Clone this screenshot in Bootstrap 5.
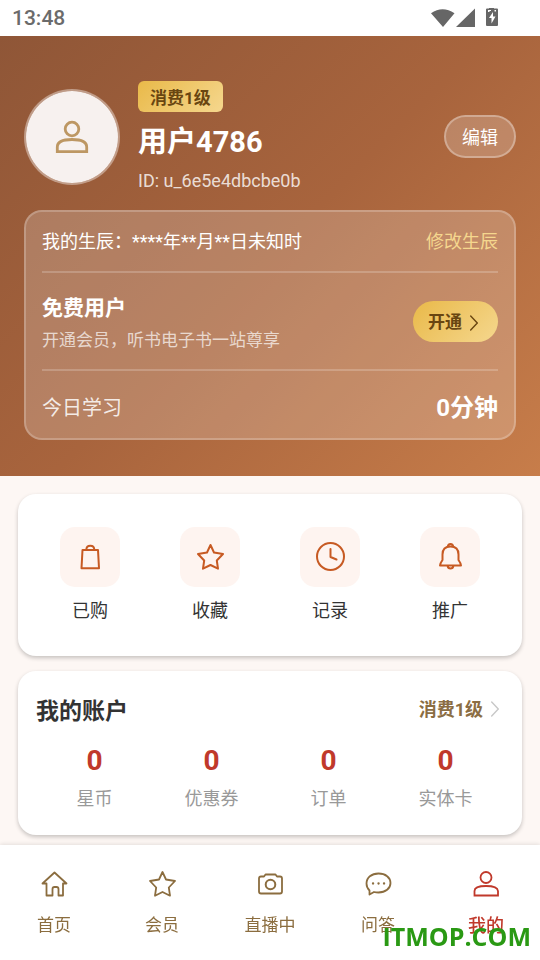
<!DOCTYPE html>
<html lang="zh-CN">
<head>
<meta charset="utf-8">
<meta name="viewport" content="width=device-width, initial-scale=1">
<title>我的</title>
<link href="https://cdn.jsdelivr.net/npm/bootstrap@5.3.0/dist/css/bootstrap.min.css" rel="stylesheet">
<style>
  body { font-family: Roboto, "Noto Sans CJK SC", sans-serif; background: #fdf7f4; color: #333; }
  button, a { font-family: inherit; }
  svg { display: block; flex: none; }
  .line-icon { fill: none; stroke: currentColor; stroke-width: 2; stroke-linejoin: round; stroke-linecap: round; }
  .thin { stroke-width: 1.8; }
  .chevron { stroke-width: 1.4; }
  .sharp { stroke-linejoin: miter; }
  .status-bar { height: 36px; padding: 0 42px 0 12px; font-size: 21px; font-weight: 500; line-height: 36px; color: #6b6b6b; background: #fff; }
  .hero { padding: 45px 24px 36px; color: #fff; background: linear-gradient(135deg, #8f5637 0%, #a8643d 50%, #c77d4a 100%); }
  .avatar { width: 96px; height: 96px; border: 2px solid rgba(255,255,255,.4); background: #f7f1ef; background-clip: padding-box; color: #bd9763; }
  .avatar svg { stroke-width: 2.8; }
  .gold { background: linear-gradient(135deg, #e9b949, #f5d78e); color: #694611; font-size: 17px; font-weight: 700; }
  .identity { margin-left: 18px; }
  .level-tag { padding: 3px 12px 0; border-radius: 6px; line-height: 28px; margin-bottom: 11px; }
  .user-name { font-size: 29px; font-weight: 700; line-height: 38px; margin: 0 0 9px; }
  .user-id { font-size: 18px; line-height: 22px; margin: 0; color: rgba(255,255,255,.8); }
  .edit-btn { padding: 2px 16px 0; height: 43px; border: 2px solid rgba(255,255,255,.3); border-radius: 22px; background: rgba(255,255,255,.2); color: #fff; font-size: 18px; }
  .member-panel { margin-top: 18px; padding: 0 16px; border: 2px solid rgba(255,255,255,.22); border-radius: 18px; background: linear-gradient(rgba(255,255,255,.2), rgba(255,255,255,.2)) border-box; }
  .panel-row { border-bottom: 2px solid rgba(255,255,255,.2); }
  .panel-row:last-child { border-bottom: 0; }
  .birth { font-size: 18px; line-height: 27px; padding: 16px 0; }
  .birth a { color: #f5d78e; }
  .plan { padding: 17px 0 16px; }
  .plan h2 { font-size: 21px; font-weight: 700; line-height: 36px; margin: 0 0 2px; }
  .plan p { font-size: 17px; line-height: 25px; margin: 0; color: rgba(255,255,255,.7); }
  .open-btn { height: 41px; padding: 2px 20px 0 15px; gap: 8px; border: 0; border-radius: 21px; }
  .today { padding: 19px 0 12px; font-size: 20px; line-height: 36px; color: rgba(255,255,255,.85); }
  .today strong { font-size: 24px; font-weight: 700; color: #fff; }
  .content { padding: 18px 18px 130px; }
  .sheet { background: #fff; border-radius: 18px; box-shadow: 0 2px 4px rgba(0,0,0,.22); }
  .shortcuts { padding: 33px 12px 32px; margin-bottom: 15px; }
  .shortcuts a { color: #333; font-size: 18px; line-height: 27px; gap: 10px; }
  .tile { width: 60px; height: 60px; border-radius: 15px; background: #fef4f0; color: #c75a23; }
  .account { padding: 18px 18px 23px; }
  .account h2 { font-size: 23px; font-weight: 700; line-height: 34px; margin: 0; padding-top: 6px; }
  .account-level { color: #8b6d43; font-size: 18px; font-weight: 700; gap: 8px; padding-right: 5px; }
  .stat { color: #999; font-size: 18px; line-height: 27px; padding-top: 13px; }
  .stat strong { display: block; color: #c0392b; font-size: 28px; line-height: 38px; margin-bottom: 5px; }
  .tab-bar { background: #fff; box-shadow: 0 -1px 4px rgba(0,0,0,.1); padding: 24px 0 22px; }
  .tab-bar a { color: #8b6d3f; font-size: 17px; line-height: 25px; gap: 14px; }
  .tab-bar a.active { color: #c0392b; font-size: 18px; font-weight: 500; }
  .site-mark { position: absolute; right: 9px; bottom: 6px; font: 700 25px/36px "Open Sans", sans-serif; color: #2a9914; }
</style>
</head>
<body>
<div class="status-bar d-flex align-items-center justify-content-between">
  <span>13:48</span>
  <svg width="68" height="20" viewBox="0 0 68 20" fill="#666" role="img" aria-label="Wi-Fi、信号、充电">
    <path d="M1 5.300Q12.500-3 24.500 5.300L13 19ZM26 19 45 .500V19Z"/>
    <path fill-rule="evenodd" d="M57 .500h2V-1h5v1.500h3q1 0 1 1V17q0 1-1 1H57q-1 0-1-1V1.500q0-1 1-1ZM63 4 59 10h2.500v5.500L65.500 8.500H63ZM58 2v2h1.500V3H61V2ZM64.500 2v1.500H66V2Z"/>
  </svg>
</div>

<header class="hero">
  <div class="d-flex align-items-center">
    <div class="avatar rounded-circle d-flex align-items-center justify-content-center flex-shrink-0">
      <svg class="line-icon sharp" width="36" height="36" viewBox="0 0 36 36"><circle cx="18" cy="10" r="6.800"/><path d="M3.300 32.700V28Q3.300 20.500 18 20.500T32.700 28V32.700Z"/></svg>
    </div>
    <div class="identity flex-grow-1">
      <div class="d-flex"><span class="gold level-tag">消费1级</span></div>
      <h1 class="user-name">用户4786</h1>
      <p class="user-id">ID: u_6e5e4dbcbe0b</p>
    </div>
    <button type="button" class="edit-btn">编辑</button>
  </div>

  <section class="member-panel">
    <div class="panel-row birth d-flex justify-content-between">
      <span>我的生辰：****年**月**日未知时</span>
      <a href="#" class="text-decoration-none">修改生辰</a>
    </div>
    <div class="panel-row plan d-flex justify-content-between align-items-center">
      <div>
        <h2>免费用户</h2>
        <p>开通会员，听书电子书一站尊享</p>
      </div>
      <button type="button" class="gold open-btn d-flex align-items-center">开通
        <svg class="line-icon chevron" width="8" height="16" viewBox="0 0 8 16"><path d="M.700 1 7.300 8 .700 15"/></svg>
      </button>
    </div>
    <div class="panel-row today d-flex justify-content-between align-items-center">
      <span>今日学习</span><strong>0分钟</strong>
    </div>
  </section>
</header>

<main class="content">
  <nav class="sheet shortcuts row g-0" aria-label="快捷入口">
    <a href="#" class="col-3 d-flex flex-column align-items-center text-decoration-none">
      <span class="tile d-flex align-items-center justify-content-center"><svg class="line-icon" width="30" height="30" viewBox="0 0 30 30"><path d="M7.500 8H23L24 26.300H6.500ZM11.300 8Q11.300 3.800 15.300 3.800T19.300 8"/></svg></span>已购</a>
    <a href="#" class="col-3 d-flex flex-column align-items-center text-decoration-none">
      <span class="tile d-flex align-items-center justify-content-center"><svg class="line-icon" width="30" height="30" viewBox="0 0 30 30"><path d="M15.500 3 19 10.500 28 12 21.800 18.500 23 26.700 15.500 23 8 26.700 9.200 18.500 3 12 12 10.500Z"/></svg></span>收藏</a>
    <a href="#" class="col-3 d-flex flex-column align-items-center text-decoration-none">
      <span class="tile d-flex align-items-center justify-content-center"><svg class="line-icon" width="30" height="30" viewBox="0 0 30 30"><circle cx="15.500" cy="14.500" r="13.500"/><path d="M15.500 7V15L21.500 17.500"/></svg></span>记录</a>
    <a href="#" class="col-3 d-flex flex-column align-items-center text-decoration-none">
      <span class="tile d-flex align-items-center justify-content-center"><svg class="line-icon" width="30" height="30" viewBox="0 0 30 30"><path d="M5 23.500Q5 21.500 7.500 18V12.500Q7.500 4.500 15.500 4.500T23.500 12.500V18Q26 21.500 26 23.500ZM12.700 5Q13 2 15.500 2T18.300 5M12.500 23.500Q13 26.500 15.500 26.500T18.500 23.500"/></svg></span>推广</a>
  </nav>

  <section class="sheet account">
    <div class="d-flex justify-content-between align-items-center">
      <h2>我的账户</h2>
      <a href="#" class="account-level d-flex align-items-center text-decoration-none">消费1级
        <svg class="line-icon chevron" width="8" height="16" viewBox="0 0 8 16"><path d="M.700 1 7.300 8 .700 15" stroke="#c8c8c8"/></svg>
      </a>
    </div>
    <div class="row g-0 text-center">
      <div class="col-3 stat"><strong>0</strong>星币</div>
      <div class="col-3 stat"><strong>0</strong>优惠券</div>
      <div class="col-3 stat"><strong>0</strong>订单</div>
      <div class="col-3 stat"><strong>0</strong>实体卡</div>
    </div>
  </section>
</main>

<nav class="tab-bar fixed-bottom d-flex" aria-label="主导航">
  <a href="#" class="w-100 d-flex flex-column align-items-center text-decoration-none">
    <svg class="line-icon thin" width="30" height="30" viewBox="0 0 30 30"><path d="M15.500 3.500 27.500 14.500H24V26.500H19.500V20Q19.500 18 17.500 18H15.500Q13.500 18 13.500 20V26.500H7.500V14.500H3.500Z"/></svg>首页</a>
  <a href="#" class="w-100 d-flex flex-column align-items-center text-decoration-none">
    <svg class="line-icon thin" width="30" height="30" viewBox="0 0 30 30"><path d="M15.500 3 19 10.500 28 12 21.800 18.500 23 26.700 15.500 23 8 26.700 9.200 18.500 3 12 12 10.500Z"/></svg>会员</a>
  <a href="#" class="w-100 d-flex flex-column align-items-center text-decoration-none">
    <svg class="line-icon thin" width="30" height="30" viewBox="0 0 30 30"><path d="M6 7.500H9L10.500 5.500H20.500L22 7.500H25Q27 7.500 27 9.500V22.500Q27 24.500 25 24.500H6Q4 24.500 4 22.500V9.500Q4 7.500 6 7.500Z"/><circle cx="15.500" cy="15.500" r="4.800" stroke-width="2"/></svg>直播中</a>
  <a href="#" class="w-100 d-flex flex-column align-items-center text-decoration-none">
    <svg class="line-icon thin" width="30" height="30" viewBox="0 0 30 30"><path d="M6.500 21.500Q3.500 18.500 3.500 14.500C3.500 8.500 8.500 4.500 15.500 4.500S27.500 8.500 27.500 14 22.500 23.500 15.500 23.500Q13 23.500 11 23L6.500 25.500Z"/><path d="M10 14.500h.1M15.500 14.500h.1M21 14.500h.1" style="stroke-width:2.300"/></svg>问答</a>
  <a href="#" class="active w-100 d-flex flex-column align-items-center text-decoration-none" aria-current="page">
    <svg class="line-icon thin sharp" width="30" height="30" viewBox="0 0 30 30"><circle cx="15" cy="8.500" r="5.500"/><path d="M3.500 26.500V22Q3.500 17 15 17T27 22V26.500Z"/></svg>我的</a>
  <span class="site-mark">ITMOP.COM</span>
</nav>
<script src="https://cdn.jsdelivr.net/npm/bootstrap@5.3.0/dist/js/bootstrap.bundle.min.js"></script>
</body>
</html>
